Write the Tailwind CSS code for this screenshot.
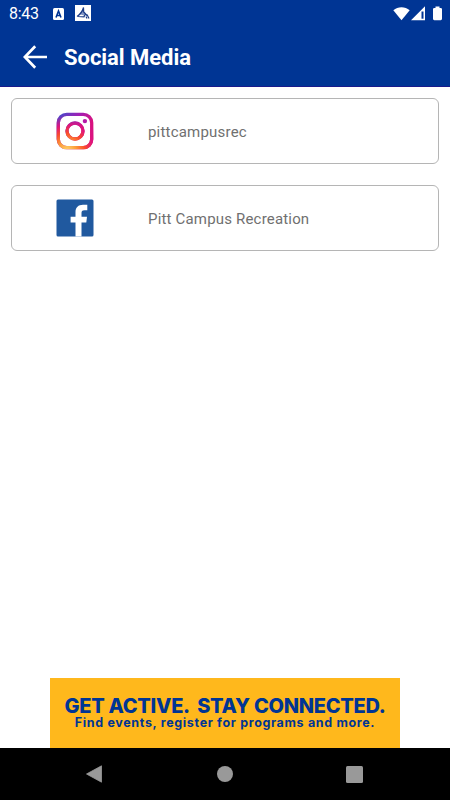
<!DOCTYPE html>
<html lang="en">
  <head>
    <meta charset="UTF-8" />
    <meta name="viewport" content="width=device-width, initial-scale=1.0" />
    <title>Social Media</title>
    <script src="https://cdn.jsdelivr.net/npm/@tailwindcss/browser@4"></script>
  </head>
  <body class="flex h-screen flex-col overflow-hidden bg-white font-['Roboto',sans-serif]">
    <!-- Header -->
    <header class="h-[87px] shrink-0 border-b border-[#1a1a8c] bg-[#003594] text-white">
      <!-- Status bar -->
      <div class="flex h-[27px] items-center pr-2 pl-[9px]">
        <span class="w-11 text-base leading-none tracking-[-0.3px]">8:43</span>
        <svg class="h-3 w-[11px]" viewBox="0 0 11 12">
          <rect width="11" height="12" rx="1.5" fill="#fff" />
          <path d="M3 9.5 5.5 3 8 9.5M4 7.5h3" fill="none" stroke="#003594" stroke-width="1.6" />
        </svg>
        <svg class="mb-[2px] ml-[11px] size-4" viewBox="0 0 16 16">
          <rect width="16" height="16" fill="#fff" />
          <path d="M2 11.5 9 2.5 8.5 6.5 10.5 8 9 10.5 5.5 9.5Z" fill="#8296c4" />
          <path d="M2 11.5Q7 8.5 8.5 2.5L8.7 7 12 10.5M3 11.5l6 .3 1.5-3M12 9.5l2 4M11 11.5l1 2" fill="none" stroke="#1c3c88" stroke-width="1.2" />
        </svg>
        <svg class="ml-auto h-[15px] w-[17px]" viewBox="0 0 17 15">
          <path d="M0.3 4.2C5 .1 12 .1 16.7 4.2L8.5 14.3Z" fill="#fff" />
        </svg>
        <svg class="ml-[1px] h-[15px] w-[14px]" viewBox="0 0 14 15">
          <path d="M14 .3V14.3H0Z" fill="#fff" />
          <path d="M11.5 5.5v7.2" stroke="#003594" stroke-width="2" />
        </svg>
        <svg class="ml-2 h-[15px] w-[9px]" viewBox="0 0 9 15">
          <path d="M2.5 2V.5h4V2h1.2Q9 2 9 3.2v9.6Q9 14.2 7.7 14.2H1.3Q0 14.2 0 12.8V3.2Q0 2 1.3 2Z" fill="#fff" />
        </svg>
      </div>
      <!-- Title bar -->
      <div class="flex h-[60px] items-center pl-[23px]">
        <svg class="h-6 w-6" viewBox="0 0 24 24" fill="none" stroke="#fff" stroke-width="2.7">
          <path d="M12.2 1.2 1.8 12 12.2 22.8M2 12h22" />
        </svg>
        <h1 class="mt-[1px] ml-[17px] text-[22px] leading-none font-bold tracking-[-0.04px]">Social Media</h1>
      </div>
    </header>

    <!-- Links -->
    <main class="flex flex-1 flex-col gap-[21px] px-[11px] pt-[11px]">
      <a class="flex h-[66px] items-center rounded-md border border-[#b5b5b5] pl-11">
        <svg class="h-[38px] w-[38px]" viewBox="0 0 38 38">
          <defs>
            <linearGradient id="igBase" x1="0.1" y1="0" x2="0.8" y2="0.5">
              <stop offset="0" stop-color="#5145c8" />
              <stop offset="0.5" stop-color="#a01fb5" />
              <stop offset="1" stop-color="#d8127f" />
            </linearGradient>
            <radialGradient id="igWarm" gradientUnits="userSpaceOnUse" cx="11" cy="39" r="36">
              <stop offset="0" stop-color="#ffd670" />
              <stop offset="0.25" stop-color="#fda03c" />
              <stop offset="0.5" stop-color="#fa4b2c" />
              <stop offset="0.72" stop-color="#e0147c" />
              <stop offset="1" stop-color="#d0148a" stop-opacity="0" />
            </radialGradient>
          </defs>
          <g fill="none" stroke="url(#igBase)" stroke-width="3.3">
            <rect x="2.3" y="2.3" width="33.4" height="33.4" rx="8.5" />
            <circle cx="19" cy="19" r="8" />
          </g>
          <g fill="none" stroke="url(#igWarm)" stroke-width="3.3">
            <rect x="2.3" y="2.3" width="33.4" height="33.4" rx="8.5" />
            <circle cx="19" cy="19" r="8" />
          </g>
          <circle cx="28.9" cy="9.1" r="2.2" fill="#b51ba8" />
        </svg>
        <span class="mt-[2px] ml-[54px] text-[15px] leading-5 tracking-[0.2px] text-[#707070]">pittcampusrec</span>
      </a>
      <a class="flex h-[66px] items-center rounded-md border border-[#b5b5b5] pl-11">
        <svg class="h-[38px] w-[38px]" viewBox="0 0 38 38">
          <rect x="0.5" y="0.5" width="37" height="37" rx="1.5" fill="#20599f" />
          <path d="M19.5 37.5V23.4H14.6V17.7H19.5V13.4C19.5 8.5 22.4 5.8 27 5.8H31.3V11.2H28.5C26 11.2 25.5 12.4 25.5 14.2V17.7H31L30.3 23.4H25.5V37.5Z" fill="#fff" />
        </svg>
        <span class="mt-[2px] ml-[54px] text-[15px] leading-5 tracking-[0.18px] text-[#707070]">Pitt Campus Recreation</span>
      </a>
    </main>

    <!-- Banner -->
    <div class="mx-auto flex h-[70px] w-[350px] shrink-0 flex-col items-center bg-[#ffb81c] pt-[17px] font-['Inter',sans-serif] whitespace-pre text-[#003594]">
      <p class="text-[20px] leading-[22px] font-extrabold tracking-[-0.28px]">GET ACTIVE.  STAY CONNECTED.</p>
      <p class="text-[12.5px] leading-[11px] font-bold tracking-[0.66px]">Find events, register for programs and more.</p>
    </div>

    <!-- System navigation -->
    <nav class="flex h-[52px] shrink-0 items-center justify-between bg-black pr-[87px] pl-[86px]">
      <svg class="h-[18px] w-[17px]" viewBox="0 0 17 18">
        <path d="M15.5.8V17.2L.5 9Z" fill="#999" stroke="#999" stroke-width="0.8" stroke-linejoin="round" />
      </svg>
      <span class="size-4 rounded-full bg-[#999]"></span>
      <span class="size-[17px] rounded-[1.5px] bg-[#999]"></span>
    </nav>
  </body>
</html>
